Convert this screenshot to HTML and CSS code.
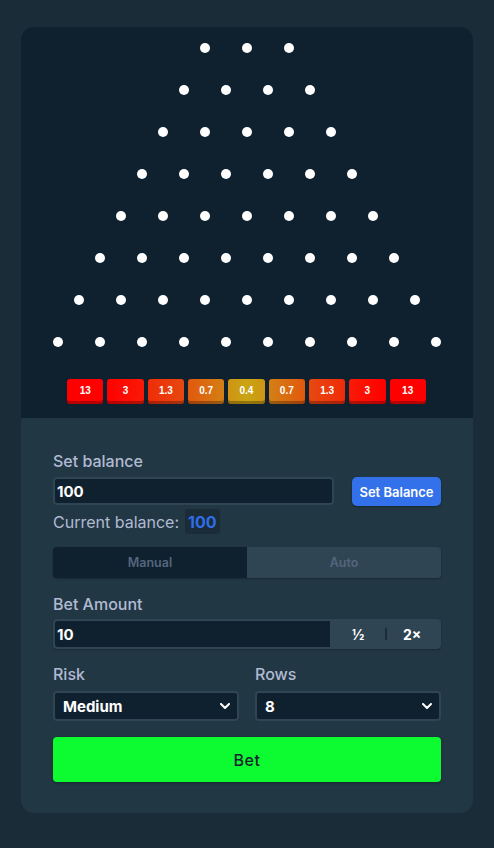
FILE: index.html
```html
<!DOCTYPE html>
<html lang="en">
<head>
<meta charset="utf-8">
<title>Plinko</title>
<link rel="stylesheet" href="styles.css">
</head>
<body>
<div class="card">
  <div class="board">
    <div class="pegs">
      <div class="row"><span class="peg"></span><span class="peg"></span><span class="peg"></span></div>
      <div class="row"><span class="peg"></span><span class="peg"></span><span class="peg"></span><span class="peg"></span></div>
      <div class="row"><span class="peg"></span><span class="peg"></span><span class="peg"></span><span class="peg"></span><span class="peg"></span></div>
      <div class="row"><span class="peg"></span><span class="peg"></span><span class="peg"></span><span class="peg"></span><span class="peg"></span><span class="peg"></span></div>
      <div class="row"><span class="peg"></span><span class="peg"></span><span class="peg"></span><span class="peg"></span><span class="peg"></span><span class="peg"></span><span class="peg"></span></div>
      <div class="row"><span class="peg"></span><span class="peg"></span><span class="peg"></span><span class="peg"></span><span class="peg"></span><span class="peg"></span><span class="peg"></span><span class="peg"></span></div>
      <div class="row"><span class="peg"></span><span class="peg"></span><span class="peg"></span><span class="peg"></span><span class="peg"></span><span class="peg"></span><span class="peg"></span><span class="peg"></span><span class="peg"></span></div>
      <div class="row"><span class="peg"></span><span class="peg"></span><span class="peg"></span><span class="peg"></span><span class="peg"></span><span class="peg"></span><span class="peg"></span><span class="peg"></span><span class="peg"></span><span class="peg"></span></div>
    </div>
    <div class="mults">
      <div class="mult m13">13</div>
      <div class="mult m3a">3</div>
      <div class="mult m13a">1.3</div>
      <div class="mult m07a">0.7</div>
      <div class="mult m04">0.4</div>
      <div class="mult m07b">0.7</div>
      <div class="mult m13b">1.3</div>
      <div class="mult m3b">3</div>
      <div class="mult m13">13</div>
    </div>
  </div>
  <div class="panel">
    <div class="label">Set balance</div>
    <div class="balance-row">
      <div class="input wide"><span class="val">100</span></div>
      <button class="btn-blue">Set Balance</button>
    </div>
    <div class="current">
      <span>Current balance:</span>
      <span class="cur-val">100</span>
    </div>
    <div class="toggle">
      <div class="tab tab-manual">Manual</div>
      <div class="tab tab-auto">Auto</div>
    </div>
    <div class="label label-bet">Bet Amount</div>
    <div class="bet-row">
      <div class="bet-input"><span class="val">10</span></div>
      <div class="bet-actions">
        <span class="act half">½</span>
        <span class="sep"></span>
        <span class="act dbl">2×</span>
      </div>
    </div>
    <div class="selects">
      <div class="col">
        <div class="label">Risk</div>
        <div class="select"><span class="val">Medium</span>
          <svg class="chev" viewBox="0 0 10 6" width="10" height="6"><path d="M1 1l4 4 4-4" fill="none" stroke="#fff" stroke-width="2" stroke-linecap="round" stroke-linejoin="round"/></svg>
        </div>
      </div>
      <div class="col">
        <div class="label">Rows</div>
        <div class="select"><span class="val">8</span>
          <svg class="chev" viewBox="0 0 10 6" width="10" height="6"><path d="M1 1l4 4 4-4" fill="none" stroke="#fff" stroke-width="2" stroke-linecap="round" stroke-linejoin="round"/></svg>
        </div>
      </div>
    </div>
    <button class="btn-bet">Bet</button>
  </div>
</div>
</body>
</html>
```

FILE: styles.css
```css
* { box-sizing: border-box; }
html, body { margin: 0; padding: 0; }
body {
  background: #1a2c38;
  font-family: Inter, "Noto Sans", sans-serif;
  width: 494px;
  height: 848px;
  padding: 27px 21px 0 21px;
}
.card {
  width: 452px;
  border-radius: 13px;
  overflow: hidden;
  background: #213743;
}
.board {
  background: #0f212e;
  padding: 16px 0 14px 0;
  display: flex;
  flex-direction: column;
  align-items: center;
}
.pegs {
  display: flex;
  flex-direction: column;
  gap: 32px;
}
.row {
  display: flex;
  justify-content: center;
  gap: 32px;
}
.peg {
  width: 10px;
  height: 10px;
  border-radius: 50%;
  background: #fff;
}
.mults {
  display: flex;
  gap: 4px;
  margin-top: 32px;
  margin-left: -1px;
}
.mult {
  width: 36.3px;
  height: 25px;
  border-radius: 3px;
  display: flex;
  align-items: center;
  justify-content: center;
  padding-bottom: 2px;
  color: #fff;
  font-family: "Liberation Sans", Arial, sans-serif;
  font-weight: 700;
  font-size: 10px;
  box-shadow: inset 0 -3px 0 rgba(0,0,0,0.28);
}
.m13 { background: #ff0000; }
.m3a { background: linear-gradient(90deg, #ff0000, #f91a06); }
.m3b { background: linear-gradient(90deg, #f91a06, #ff0000); }
.m13a { background: linear-gradient(90deg, #ef2c08, #e74810); }
.m13b { background: linear-gradient(90deg, #e74810, #ef2c08); }
.m07a { background: linear-gradient(90deg, #e2580d, #d38015); }
.m07b { background: linear-gradient(90deg, #d38015, #e2580d); }
.m04 { background: linear-gradient(90deg, #cf9412, #c9a414 50%, #cf9412); }

.panel {
  padding: 33px 32px 31px 32px;
  display: flex;
  flex-direction: column;
}
.label {
  color: #b1bad3;
  font-size: 16px;
  font-weight: 500;
  line-height: 20px;
  height: 20px;
}
.balance-row {
  display: flex;
  gap: 18px;
  margin-top: 6px;
  align-items: flex-start;
}
.input {
  height: 28px;
  background: #0f212e;
  border: 2px solid #2f4553;
  border-radius: 4px;
  display: flex;
  align-items: center;
  padding-left: 2px;
}
.wide { flex: 1; }
.val {
  color: #fff;
  font-weight: 700;
  font-size: 15px;
}
.btn-blue {
  width: 89px;
  height: 29px;
  background: #3371ea;
  color: #fff;
  border: none;
  border-radius: 5px;
  font-family: inherit;
  font-weight: 600;
  font-size: 13px;
  padding: 0;
  box-shadow: 0 1px 2px rgba(0,0,0,0.3);
}
.current {
  margin-top: 3px;
  height: 25px;
  display: flex;
  align-items: center;
  gap: 6px;
  color: #b1bad3;
  font-size: 16px;
}
.cur-val {
  background: #1a2c38;
  color: #2f6ee8;
  font-weight: 700;
  height: 25px;
  padding: 0 3px;
  display: flex;
  align-items: center;
  border-radius: 3px;
}
.toggle {
  margin-top: 13px;
  height: 31px;
  display: flex;
  border-radius: 4px;
  overflow: hidden;
  box-shadow: 0 1px 2px rgba(0,0,0,0.25);
}
.tab {
  flex: 1;
  display: flex;
  align-items: center;
  justify-content: center;
  color: #55657e;
  font-size: 12.5px;
  font-weight: 600;
}
.tab-manual { background: #0f212e; }
.tab-auto { background: #2f4553; }
.label-bet { margin-top: 16px; }
.bet-row {
  margin-top: 5px;
  height: 30px;
  display: flex;
  background: #2f4553;
  border-radius: 4px;
  padding: 2px;
  box-shadow: 0 1px 2px rgba(0,0,0,0.25);
}
.bet-input {
  width: 275px;
  background: #0f212e;
  border-radius: 3px 0 0 3px;
  display: flex;
  align-items: center;
  padding-left: 2px;
}
.bet-actions {
  flex: 1;
  display: flex;
  align-items: center;
  padding-left: 22px;
}
.act {
  color: #fff;
  font-weight: 700;
  font-size: 14px;
}
.half { width: 12px; }
.sep {
  width: 2px;
  height: 12px;
  background: #1a2c38;
  margin-left: 21px;
}
.dbl { margin-left: 16px; }
.selects {
  margin-top: 15px;
  display: flex;
  gap: 16px;
}
.col { flex: 1; display: flex; flex-direction: column; }
.select {
  margin-top: 7px;
  height: 30px;
  background: #0f212e;
  border: 2px solid #2f4553;
  border-radius: 4px;
  display: flex;
  align-items: center;
  justify-content: space-between;
  padding: 0 7px 0 8px;
}
.chev { display: block; }
.btn-bet {
  margin-top: 16px;
  height: 45px;
  background: #0dfc31;
  border: none;
  border-radius: 4px;
  color: #14242e;
  font-family: inherit;
  font-size: 16px;
  font-weight: 500;
  letter-spacing: 0.5px;
  box-shadow: 0 1px 3px rgba(0,0,0,0.3);
}
```
